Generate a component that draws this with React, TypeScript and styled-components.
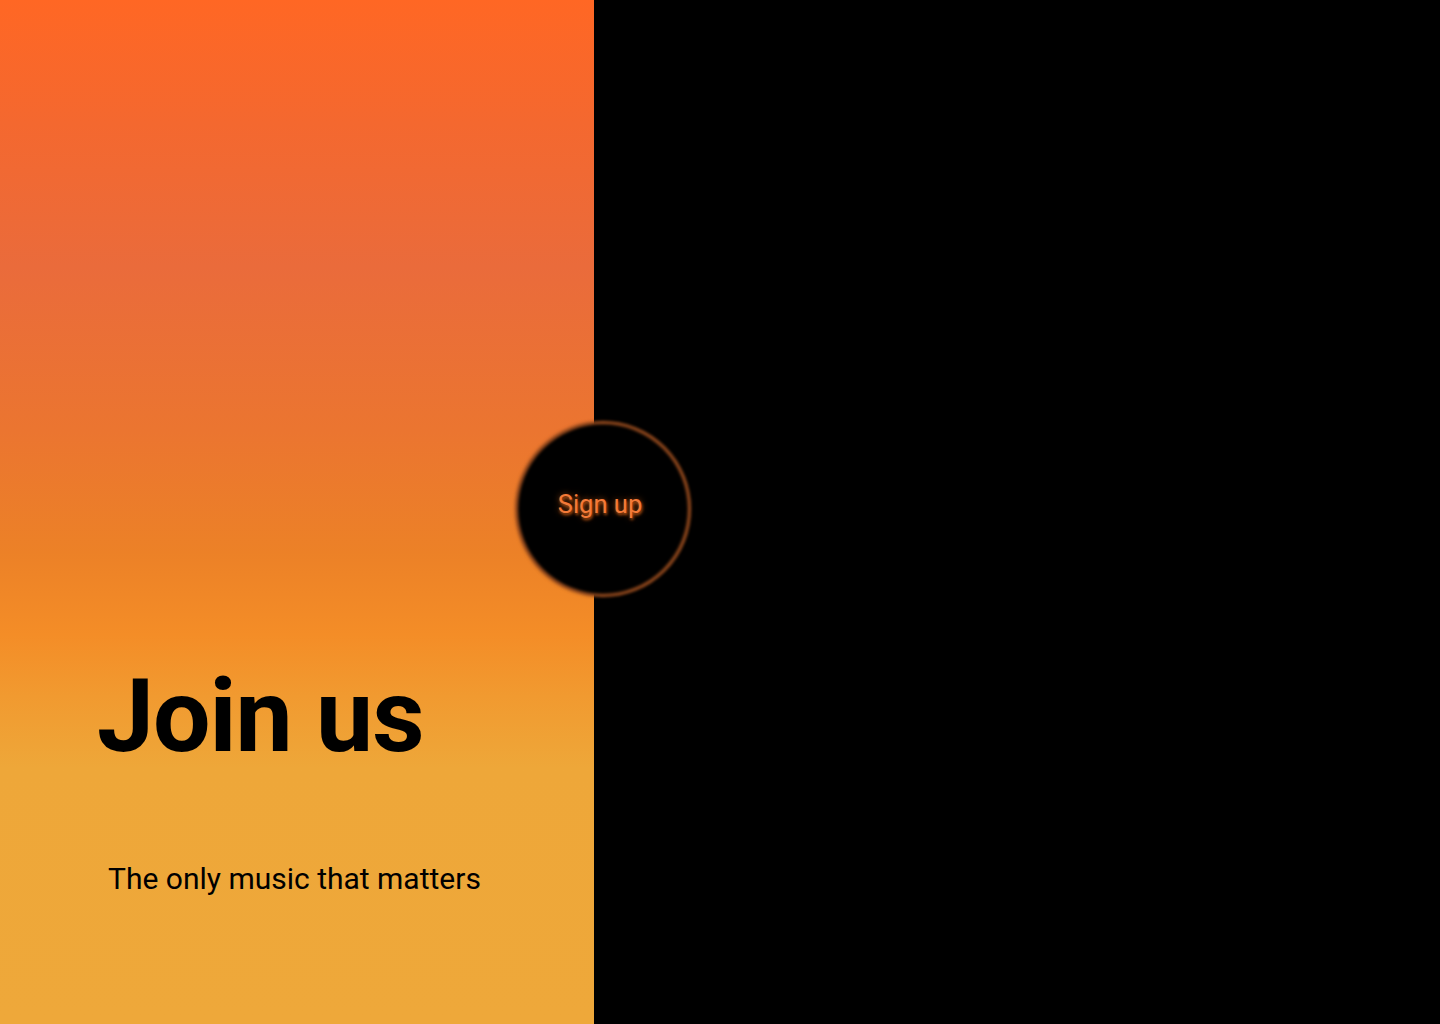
import React from "react";
import styled, { createGlobalStyle } from "styled-components";

const Global = createGlobalStyle`
  html, body { margin: 0; padding: 0; background: #000; }
  body { font-family: Roboto, "Liberation Sans", sans-serif; }
  * { box-sizing: border-box; }
`;

const Page = styled.main`
  position: relative;
  display: grid;
  grid-template-columns: 594px 1fr;
  height: 100vh;
  min-height: 1024px;
  overflow: hidden;
`;

const Hero = styled.section`
  display: flex;
  flex-direction: column;
  justify-content: flex-end;
  padding: 0 0 130px 0;
  background: linear-gradient(
    180deg,
    #ff6724 0%,
    #f4682f 12%,
    #ea6b3b 26%,
    #eb7530 42%,
    #ec8127 54%,
    #f48d27 62%,
    #f19a30 68%,
    #eea739 75%,
    #eea83a 100%
  );
`;

const Title = styled.h1`
  margin: 0 0 97px 97px;
  font-family: Roboto, "Liberation Sans", sans-serif;
  font-weight: 700;
  font-size: 102px;
  line-height: 1;
  letter-spacing: -1px;
  color: #000;
`;

const Tagline = styled.p`
  margin: 0 0 0 108px;
  font-family: Roboto, "Liberation Sans", sans-serif;
  font-weight: 400;
  font-size: 30px;
  line-height: 1;
  color: #000;
`;

const Dark = styled.section`
  background: #000;
`;

const SignUp = styled.button`
  position: absolute;
  left: 515px;
  top: 421px;
  width: 176px;
  height: 176px;
  border: none;
  padding: 0;
  background: transparent;
  cursor: pointer;
  display: flex;
  align-items: center;
  justify-content: center;

  &::before {
    content: "";
    position: absolute;
    inset: 0;
    border-radius: 50%;
    background: #000;
    border: 4px solid #ad5622;
    filter: blur(1.5px);
  }
  &::after {
    content: "";
    position: absolute;
    inset: 4px;
    border-radius: 50%;
    background: #000;
    filter: blur(3px);
  }
`;

const SignUpLabel = styled.span`
  position: relative;
  z-index: 1;
  font-family: Roboto, "Liberation Sans", sans-serif;
  font-size: 25.5px;
  font-weight: 400;
  color: #f47a38;
  text-shadow: 1px 2px 3px rgba(200, 90, 20, 0.9), 0 0 6px rgba(230, 110, 30, 0.6);
  margin-top: -10px;
  margin-left: -6px;
`;

export default function App() {
  return (
    <>
      <Global />
      <Page>
        <Hero>
          <Title>Join us</Title>
          <Tagline>The only music that matters</Tagline>
        </Hero>
        <Dark />
        <SignUp type="button">
          <SignUpLabel>Sign up</SignUpLabel>
        </SignUp>
      </Page>
    </>
  );
}
